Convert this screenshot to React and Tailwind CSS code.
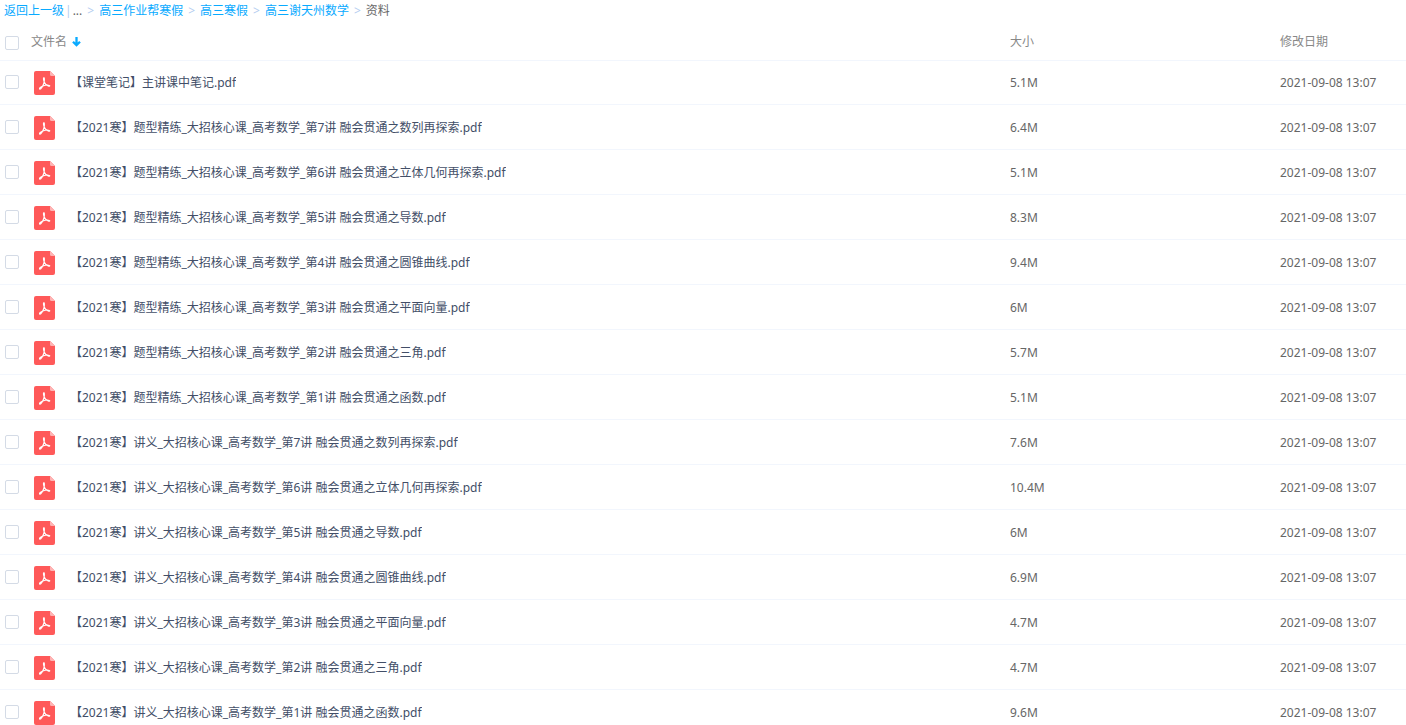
import React, { useState } from "react";

const CRUMBS = ["高三作业帮寒假", "高三寒假", "高三谢天州数学"];

const DATE = "2021-09-08 13:07";

const FILES = [
  { name: "【课堂笔记】主讲课中笔记.pdf", size: "5.1M" },
  { name: "【2021寒】题型精练_大招核心课_高考数学_第7讲 融会贯通之数列再探索.pdf", size: "6.4M" },
  { name: "【2021寒】题型精练_大招核心课_高考数学_第6讲 融会贯通之立体几何再探索.pdf", size: "5.1M" },
  { name: "【2021寒】题型精练_大招核心课_高考数学_第5讲 融会贯通之导数.pdf", size: "8.3M" },
  { name: "【2021寒】题型精练_大招核心课_高考数学_第4讲 融会贯通之圆锥曲线.pdf", size: "9.4M" },
  { name: "【2021寒】题型精练_大招核心课_高考数学_第3讲 融会贯通之平面向量.pdf", size: "6M" },
  { name: "【2021寒】题型精练_大招核心课_高考数学_第2讲 融会贯通之三角.pdf", size: "5.7M" },
  { name: "【2021寒】题型精练_大招核心课_高考数学_第1讲 融会贯通之函数.pdf", size: "5.1M" },
  { name: "【2021寒】讲义_大招核心课_高考数学_第7讲 融会贯通之数列再探索.pdf", size: "7.6M" },
  { name: "【2021寒】讲义_大招核心课_高考数学_第6讲 融会贯通之立体几何再探索.pdf", size: "10.4M" },
  { name: "【2021寒】讲义_大招核心课_高考数学_第5讲 融会贯通之导数.pdf", size: "6M" },
  { name: "【2021寒】讲义_大招核心课_高考数学_第4讲 融会贯通之圆锥曲线.pdf", size: "6.9M" },
  { name: "【2021寒】讲义_大招核心课_高考数学_第3讲 融会贯通之平面向量.pdf", size: "4.7M" },
  { name: "【2021寒】讲义_大招核心课_高考数学_第2讲 融会贯通之三角.pdf", size: "4.7M" },
  { name: "【2021寒】讲义_大招核心课_高考数学_第1讲 融会贯通之函数.pdf", size: "9.6M" },
];

function PdfIcon() {
  return (
    <svg className="h-6 w-[21px] shrink-0" viewBox="0 0 21 24" fill="none" aria-hidden="true">
      <path d="M2 0H16L21 5V22a2 2 0 0 1-2 2H2a2 2 0 0 1-2-2V2a2 2 0 0 1 2-2Z" fill="#ff5959" />
      <path d="M16 0L21 5H17.5A1.5 1.5 0 0 1 16 3.5Z" fill="#ffb4b4" />
      <path
        d="M9.800 6.700c-.8.3-.2 2.600.3 3.900.8 2.100 2.100 3.600 4.100 4.500 1.400.6 2.100-.3 1.100-.7-1.700-.7-4.400-.1-6.400.7-2.100.8-3.800 2-3.400 2.900.4.7 2-.6 3-2.400 1-1.900 1.700-4.100 1.900-6.200.1-1.700-.1-2.900-.6-2.700Z"
        stroke="#fff"
        strokeWidth="1.100"
        strokeLinejoin="round"
      />
    </svg>
  );
}

function Checkbox({ label, checked, onChange }) {
  return (
    <input
      type="checkbox"
      aria-label={label}
      checked={checked}
      onChange={onChange}
      className="size-3.5 shrink-0 cursor-pointer appearance-none rounded-xs border border-[#d4dbe6] bg-white checked:border-[#09aaff] checked:bg-[#09aaff]"
    />
  );
}

function Separator() {
  return <span className="mx-[5px] text-[#b4cdf0]">&gt;</span>;
}

export default function App() {
  const [selected, setSelected] = useState([]);
  const [reversed, setReversed] = useState(false);

  const files = reversed ? [...FILES].reverse() : FILES;
  const allSelected = selected.length === FILES.length;

  const toggle = (name) =>
    setSelected((prev) => (prev.includes(name) ? prev.filter((n) => n !== name) : [...prev, name]));

  return (
    <div className="min-h-screen bg-white font-['Noto_Sans','Noto_Sans_CJK_SC',sans-serif] text-xs text-[#666]">
      <nav className="flex h-[22px] items-center whitespace-nowrap pl-1">
        <a href="#back" className="text-[#09aaff]">返回上一级</a>
        <span className="mx-px text-[#b4cdf0]">|</span>
        <span>...</span>
        {CRUMBS.map((crumb) => (
          <React.Fragment key={crumb}>
            <Separator />
            <a href={`#${crumb}`} className="text-[#09aaff]">{crumb}</a>
          </React.Fragment>
        ))}
        <Separator />
        <span>资料</span>
      </nav>

      <table className="w-full table-fixed border-separate border-spacing-0 text-left">
        <colgroup>
          <col />
          <col className="w-[270px]" />
          <col className="w-[126px]" />
        </colgroup>
        <thead className="text-[#888]">
          <tr className="h-[38px]">
            <th className="p-0 pl-[5px] pt-1 font-normal">
              <div className="flex items-center gap-3">
                <Checkbox
                  label="全选"
                  checked={allSelected}
                  onChange={() => setSelected(allSelected ? [] : FILES.map((f) => f.name))}
                />
                <button
                  type="button"
                  className="flex cursor-pointer items-center gap-[5px] pb-0.5"
                  onClick={() => setReversed((prev) => !prev)}
                >
                  文件名
                  <svg className="h-2.5 w-[9px]" viewBox="0 0 9 10" fill="none" aria-hidden="true">
                    <path d="M4.500 0V8.500M1 4.700L4.500 8.200L8 4.700" stroke="#09aaff" strokeWidth="2.300" />
                  </svg>
                </button>
              </div>
            </th>
            <th className="p-0 pt-0.5 font-normal">大小</th>
            <th className="p-0 pt-0.5 font-normal">修改日期</th>
          </tr>
        </thead>
        <tbody className="[&_td]:border-b [&_td]:border-[#f2f6fd] [&>tr:first-child>td]:border-t">
          {files.map((file) => (
            <tr key={file.name} className="h-[45px] align-bottom hover:bg-[#f4fbff]">
              <td className="p-0 pb-0.5 pl-[5px]">
                <div className="flex h-10 items-center">
                  <Checkbox
                    label={file.name}
                    checked={selected.includes(file.name)}
                    onChange={() => toggle(file.name)}
                  />
                  <div className="ml-[15px] flex min-w-0 items-center gap-[15px] pt-0.5">
                    <PdfIcon />
                    <a href={`#${file.name}`} className="truncate text-[#424e67]">{file.name}</a>
                  </div>
                </div>
              </td>
              <td className="p-0 pb-[13px]">{file.size}</td>
              <td className="whitespace-nowrap p-0 pb-[13px]">{DATE}</td>
            </tr>
          ))}
        </tbody>
      </table>
    </div>
  );
}
